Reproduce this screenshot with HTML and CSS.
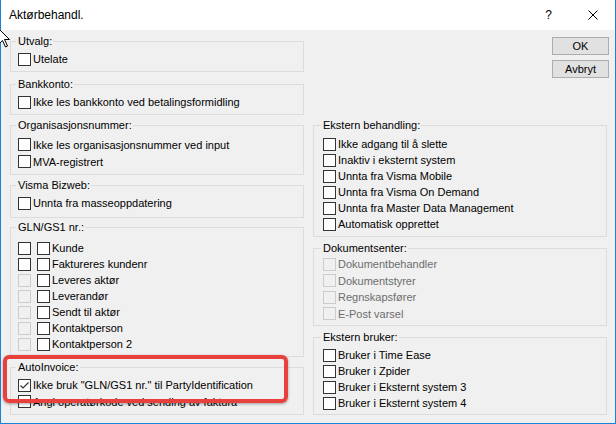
FILE: index.html
```html
<!DOCTYPE html>
<html lang="no">
<head>
<meta charset="utf-8">
<title>Aktørbehandl.</title>
<link rel="stylesheet" href="styles.css">
</head>
<body>
<div class="window">
  <div class="titlebar">
    <span class="title">Aktørbehandl.</span>
    <span class="help">?</span>
    <svg class="close" width="10" height="10" viewBox="0 0 10 10"><path d="M0.5 0.5 L9.5 9.5 M9.5 0.5 L0.5 9.5" stroke="#000" stroke-width="1"/></svg>
  </div>

  <div class="content">
    <div class="col">
      <fieldset class="group g-utvalg">
        <legend>Utvalg:</legend>
        <label class="row"><span class="box"></span>Utelate</label>
      </fieldset>

      <fieldset class="group">
        <legend>Bankkonto:</legend>
        <label class="row"><span class="box"></span>Ikke les bankkonto ved betalingsformidling</label>
      </fieldset>

      <fieldset class="group g-org">
        <legend>Organisasjonsnummer:</legend>
        <label class="row"><span class="box"></span>Ikke les organisasjonsnummer ved input</label>
        <label class="row"><span class="box"></span>MVA-registrert</label>
      </fieldset>

      <fieldset class="group g-visma">
        <legend>Visma Bizweb:</legend>
        <label class="row"><span class="box"></span>Unnta fra masseoppdatering</label>
      </fieldset>

      <fieldset class="group g-gln">
        <legend>GLN/GS1 nr.:</legend>
        <label class="row"><span class="box pair"></span><span class="box"></span>Kunde</label>
        <label class="row"><span class="box pair"></span><span class="box"></span>Faktureres kundenr</label>
        <label class="row"><span class="box pair off"></span><span class="box"></span>Leveres aktør</label>
        <label class="row"><span class="box pair off"></span><span class="box"></span>Leverandør</label>
        <label class="row"><span class="box pair off"></span><span class="box"></span>Sendt til aktør</label>
        <label class="row"><span class="box pair off"></span><span class="box"></span>Kontaktperson</label>
        <label class="row"><span class="box pair off"></span><span class="box"></span>Kontaktperson 2</label>
      </fieldset>

      <fieldset class="group g-auto">
        <legend>AutoInvoice:</legend>
        <label class="row"><span class="box"><svg class="tick" width="11" height="11" viewBox="0 0 11 11"><polyline points="1.5,5.5 4,8 9.5,2.5" fill="none" stroke="#333" stroke-width="1.2"/></svg></span>Ikke bruk "GLN/GS1 nr." til PartyIdentification</label>
        <label class="row"><span class="box"></span>Angi operatørkode ved sending av faktura</label>
      </fieldset>
    </div>

    <div class="col col-right">
      <div class="buttons">
        <button class="btn" type="button">OK</button>
        <button class="btn" type="button">Avbryt</button>
      </div>

      <fieldset class="group g-ext">
        <legend>Ekstern behandling:</legend>
        <label class="row"><span class="box"></span>Ikke adgang til å slette</label>
        <label class="row"><span class="box"></span>Inaktiv i eksternt system</label>
        <label class="row"><span class="box"></span>Unnta fra Visma Mobile</label>
        <label class="row"><span class="box"></span>Unnta fra Visma On Demand</label>
        <label class="row"><span class="box"></span>Unnta fra Master Data Management</label>
        <label class="row"><span class="box"></span>Automatisk opprettet</label>
      </fieldset>

      <fieldset class="group g-dok">
        <legend>Dokumentsenter:</legend>
        <label class="row disabled"><span class="box off"></span>Dokumentbehandler</label>
        <label class="row disabled"><span class="box off"></span>Dokumentstyrer</label>
        <label class="row disabled"><span class="box off"></span>Regnskapsfører</label>
        <label class="row disabled"><span class="box off"></span>E-Post varsel</label>
      </fieldset>

      <fieldset class="group g-bruker">
        <legend>Ekstern bruker:</legend>
        <label class="row"><span class="box"></span>Bruker i Time Ease</label>
        <label class="row"><span class="box"></span>Bruker i Zpider</label>
        <label class="row"><span class="box"></span>Bruker i Eksternt system 3</label>
        <label class="row"><span class="box"></span>Bruker i Eksternt system 4</label>
      </fieldset>
    </div>
  </div>

  <div class="highlight"></div>
  <svg class="cursor" width="12" height="20" viewBox="0 0 12 20"><path d="M0.5 0.5 V16.5 L4.5 12.5 L7.5 19 L9.5 18 L6.5 11.5 H11.5 Z" fill="#fff" stroke="#000" stroke-width="1" stroke-linejoin="miter"/></svg>
</div>
</body>
</html>
```

FILE: styles.css
```css
* {
  box-sizing: border-box;
}

html,
body {
  margin: 0;
  padding: 0;
}

body {
  width: 616px;
  height: 424px;
  overflow: hidden;
  background: #f0f0f0;
  font-family: "Liberation Sans", Arial, sans-serif;
  font-size: 11px;
  color: #000;
}

/* dialog frame */
.window {
  position: relative;
  width: 616px;
  height: 424px;
  background: #f0f0f0;
  border: 1px solid #1883d7;
  border-top: 0;
}

.titlebar {
  display: flex;
  align-items: center;
  height: 30px;
  padding: 0 17px 0 8px;
  background: #fff;
  font-size: 12px;
  line-height: 14px;
}

.title {
  flex: 1;
}

.help {
  margin-right: 36px;
}

.close {
  display: block;
}

/* two columns of group boxes */
.content {
  display: grid;
  grid-template-columns: 294px 294px;
  column-gap: 9px;
  padding: 5px 0 0 9px;
}

.col {
  display: flex;
  flex-direction: column;
}

.buttons {
  display: flex;
  flex-direction: column;
  align-items: flex-end;
  gap: 5px;
  margin: 2px -2px 41px 0;
}

.btn {
  width: 57px;
  height: 18px;
  padding: 0;
  border: 1px solid #adadad;
  background: #e1e1e1;
  font: inherit;
  line-height: 16px;
  color: #000;
}

/* group boxes */
.group {
  margin: 0 0 4px;
  padding: 3px 7px 4px;
  border: 1px solid #dcdcdc;
  min-width: 0;
  --row: 16px;
}

.group legend {
  margin-left: -2px;
  padding: 0 1px 0 2px;
  line-height: 13px;
}

.col-right .group {
  padding-left: 9px;
}

.g-utvalg {
  margin-bottom: 6px;
}

.g-org {
  padding-top: 4px;
  --row: 17px;
}

.g-visma {
  padding-bottom: 6px;
  margin-bottom: 3px;
}

.g-gln {
  padding-top: 6px;
}

.g-auto {
  --row: 16.5px;
}

.g-ext {
  padding-top: 4px;
  margin-bottom: 5px;
}

.g-dok {
  padding-top: 1px;
  padding-bottom: 3px;
  margin-bottom: 5px;
  --row: 16.5px;
}

.g-bruker {
  padding-bottom: 3px;
}

/* checkbox rows */
.row {
  display: flex;
  align-items: center;
  height: var(--row);
  white-space: nowrap;
}

.row.disabled {
  color: #6d6d6d;
}

.box {
  flex: none;
  width: 13px;
  height: 13px;
  margin-right: 2px;
  border: 1px solid #333;
  background: #fff;
}

.box.pair {
  margin-right: 6px;
}

.box.off {
  border-color: #cccccc;
  background: transparent;
}

.tick {
  display: block;
}

/* marker drawn over the AutoInvoice option */
.highlight {
  position: absolute;
  left: 2px;
  top: 355px;
  width: 285px;
  height: 48px;
  border: 4px solid #e8403d;
  border-radius: 6px;
  box-shadow: 0 1px 3px rgba(0, 0, 0, 0.35);
  pointer-events: none;
}

.cursor {
  position: absolute;
  left: -3px;
  top: 28px;
}
```
